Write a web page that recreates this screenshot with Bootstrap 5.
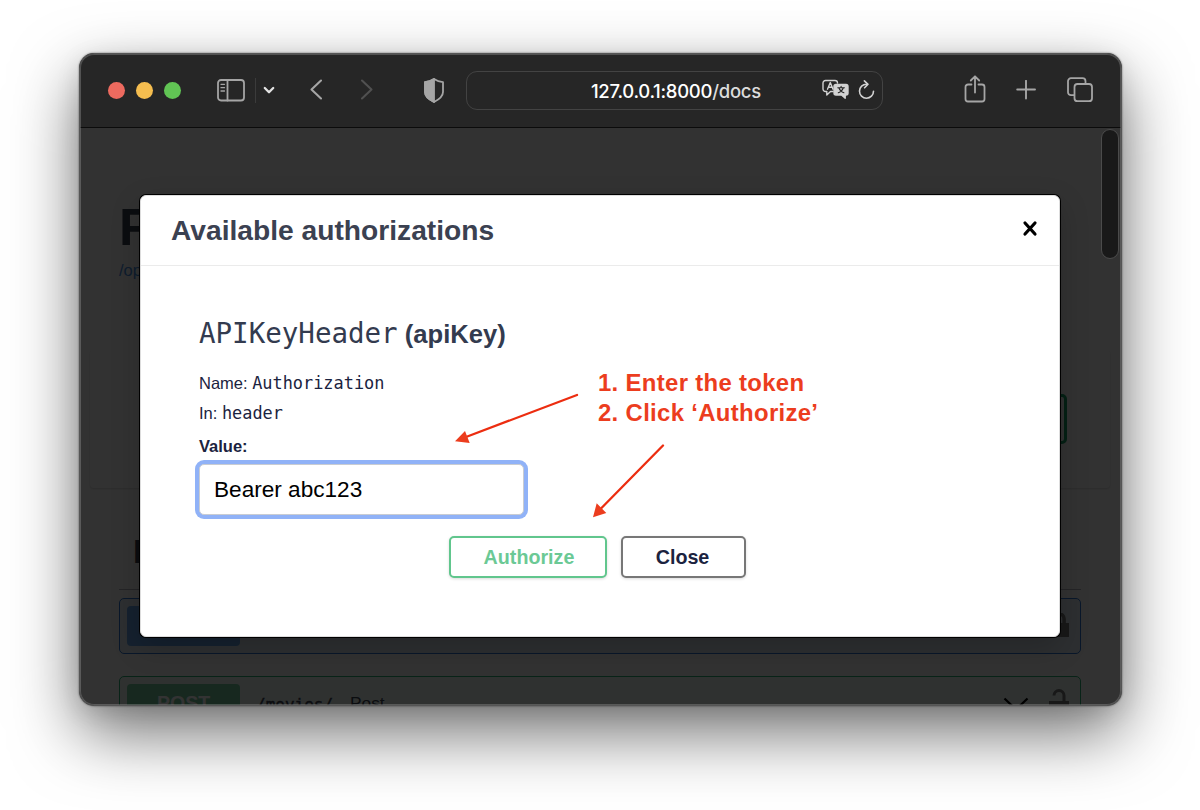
<!DOCTYPE html>
<html lang="en">
<head>
<meta charset="utf-8">
<title>127.0.0.1:8000/docs</title>
<meta name="viewport" content="width=device-width, initial-scale=1">
<link href="https://cdn.jsdelivr.net/npm/bootstrap@5.3.0/dist/css/bootstrap.min.css" rel="stylesheet">
<style>
  body { background: #fff; font-family: "Liberation Sans", Arial, sans-serif; color: #3b4151; }
  .desktop { width: 1200px; height: 810px; padding: 53px 0 0 78.5px; }
  .window { width: 1043px; height: 653px; border-radius: 15px; background: #fafafa;
    box-shadow: 0 0 2px rgba(0,0,0,.6), 0 27px 66px rgba(0,0,0,.56), 0 6px 24px rgba(0,0,0,.1); }
  .window-clip { border-radius: 15px; }
  .window-edge { inset: 0; border-radius: 15px; z-index: 9; pointer-events: none;
    border: 1px solid #555; box-shadow: inset 0 0 0 1px rgba(150,150,150,.4); }

  .toolbar { height: 75px; background: #262626; border-bottom: 1px solid #0b0b0b; padding-left: 29px; }
  .toolbar svg { flex: none; fill: none; stroke: #a5a5a5; stroke-width: 1.8; stroke-linecap: round; stroke-linejoin: round; }
  .light { width: 17px; height: 17px; border-radius: 50%; margin-right: 11.3px; }
  .tool-divider { width: 1px; height: 25px; background: #3b3b3b; margin-left: 10px; }
  .address { width: 417px; height: 39px; border: 1px solid #434343; border-radius: 11px; margin-left: 22.5px;
    font-family: Inter, sans-serif; font-size: 18.5px; font-weight: 500; color: #fff; padding-left: 123.5px; }
  .address-text { width: 231px; letter-spacing: -.28px; padding-top: 3px; }
  .address-text span { color: #dcdcdc; }

  .docs { height: 578px; padding: 0 40.5px; }
  .docs-title { font-size: 52px; font-weight: 700; line-height: 60px; padding-top: 68.5px; margin: 0; height: 132px; }
  .docs-link { font-size: 16.5px; line-height: 20px; color: #4990e2; text-decoration: none; }
  .scheme { margin: 70px -29px 0; height: 138px; padding-right: 43px; box-shadow: 0 1px 2px rgba(0,0,0,.15); border-radius: 4px; }
  .scheme-btn { width: 158px; height: 50px; border: 3px solid #14a065; border-radius: 5px; }
  .tag-title { margin: 22px 0 0; height: 80px; line-height: 84px; font-size: 33px; font-weight: 700; padding-left: 14px; border-bottom: 1px solid #b4b6bc; }
  .op { height: 56px; border: 1.5px solid; border-radius: 5px; padding: 0 10px 0 7px; font-size: 17.3px; }
  .op-get { border-color: #2f76cf; background: #e2eaf4; margin-top: 8px; }
  .op-post { border-color: #28ad74; background: #e8f6f0; margin-top: 22px; }
  .verb { width: 113px; height: 40px; border-radius: 4px; color: #fff; font-size: 19.5px; font-weight: 700; }
  .verb-get { background: #69a5e8; }
  .verb-post { background: #72c79c; }
  .op-path { font: 400 16px "DejaVu Sans Mono", monospace; margin-left: 16px; width: 94px; -webkit-text-stroke: .4px; }
  .shade { inset: 75px 0 0; background: rgba(0,0,0,.8); z-index: 2; border-radius: 0 0 15px 15px; }
  .scroll-thumb { left: 1022.5px; top: 76px; width: 18px; height: 130px; border-radius: 9px; background: #191919; border: 1px solid #4b4b4b; z-index: 3; }

  .auth { left: 61.5px; top: 142px; width: 920px; height: 442px; z-index: 4; background: #fff; border: 1px solid #ddd; border-radius: 6px;
    box-shadow: 0 0 0 1px #000, 0 10px 30px rgba(0,0,0,.2); }
  .auth-head { height: 70px; padding: 0 21px 0 30px; border-bottom: 1px solid #ebebeb; }
  .auth-head h3 { font-size: 28.2px; font-weight: 700; margin: 0; }
  .auth-body { padding: 45.5px 57px 0 58px; font-size: 16.5px; color: #1b2340; }
  .auth-body h4 { font-size: 25.6px; font-weight: 700; margin: 0; line-height: 43px; height: 44px; color: #333b4f; white-space: pre; }
  .mono { font-family: "DejaVu Sans Mono", monospace; font-weight: 400; }
  .field-row { height: 29.5px; line-height: 29.5px; white-space: pre; }
  .token-input { width: 325px; height: 51px; border: 1px solid #c9ccd2; border-radius: 5px; box-shadow: 0 0 0 4px #90b2f7; color: #000;
    font-size: 22.6px; padding: 0 14.5px; background: #fff; margin-left: -.5px; }
  .auth-btn { height: 42px; border: 2.5px solid; border-radius: 5px; font-size: 19.7px; font-weight: 700; background: #fff; box-shadow: 0 1px 3px rgba(0,0,0,.15); padding: 1px 0 0; }
  .btn-go { width: 158px; border-color: #61c68d; color: #6bc995; padding-left: 3px; }
  .btn-shut { width: 125px; border-color: #777; color: #1b2340; padding-right: 1px; }
  .note { left: 457px; top: 172px; font-size: 23.9px; line-height: 30px; font-weight: 700; letter-spacing: .33px; color: #ec3d1e; white-space: nowrap; }
  .arrows { left: 0; top: 0; }
</style>
</head>
<body>
<div class="desktop overflow-hidden">
  <div class="window position-relative">
    <div class="window-clip overflow-hidden h-100">
      <header class="toolbar d-flex align-items-center">
        <span class="light" style="background:#ed6a5f"></span>
        <span class="light" style="background:#f5bd4f"></span>
        <span class="light" style="background:#61c454"></span>
        <svg width="28" height="23" viewBox="0 0 28 23" style="margin-left:24.5px"><rect x="1" y="1" width="26" height="20.5" rx="3"/><path d="M10.5 1v20.5"/><path d="M4 5.3h3.5M4 8.7h3.5M4 12h3.5" stroke-width="1.3"/></svg>
        <span class="tool-divider"></span>
        <svg width="12" height="8" viewBox="0 0 12 8" style="margin-left:7px"><path d="M1.8 2 6 6.2 10.2 2" stroke="#e2e2e2" stroke-width="2.3"/></svg>
        <svg width="13" height="22" viewBox="0 0 13 22" style="margin-left:35px"><path d="M11 1.5 1.5 10.5 11 19.5" stroke-width="2.1"/></svg>
        <svg width="13" height="22" viewBox="0 0 13 22" style="margin-left:37px"><path d="M2 1.5 11.5 10.5 2 19.5" stroke="#505050" stroke-width="2.1"/></svg>
        <svg width="20" height="25" viewBox="0 0 20 25" style="margin-left:51px"><path d="M10 1C7 3 4 3.8 1 4.2V14c0 4.5 4 7.5 9 10 5-2.5 9-5.500 9-10V4.2C16 3.8 13 3 10 1z"/><path d="M10 1C7 3 4 3.8 1 4.2V14c0 4.5 4 7.5 9 10z" fill="#a5a5a5"/></svg>
        <div class="address d-flex align-items-center">
          <div class="address-text">127.0.0.1:8000<span>/docs</span></div>
          <svg width="27" height="21" viewBox="0 0 27 21" style="stroke:#d2d2d2;stroke-width:1.4;margin-top:-2px"><path d="M11 12.5H8.5L4.8 16v-3.5H3.5a2.5 2.5 0 0 1-2.5-2.5V4a2.5 2.5 0 0 1 2.5-2.5h9.5A2.5 2.5 0 0 1 15.5 4"/><path d="M5.5 10.2 8.3 3.6l2.7 6.6M6.3 8.3h4"/><path d="M14 5.5h10a2 2 0 0 1 2 2v6.5a2 2 0 0 1-2 2h-.8v3.3L19.5 16H14a2 2 0 0 1-2-2V7.5a2 2 0 0 1 2-2z" fill="#d2d2d2"/><path d="M15.8 8.8h6.6M19.1 7.3v1.5M21.3 9c-.8 2-2.5 4-5 4.8M16.9 9c.8 2 2.4 4 5 4.8" stroke="#262626" stroke-width="1.1"/></svg>
          <svg width="17" height="20" viewBox="0 0 17 20" style="margin-left:9px;stroke:#d2d2d2;stroke-width:1.6"><path d="M8.6 4.2A7 7 0 1 0 15.5 11.2"/><path d="M6.4.9 10 4.3 6.6 7.8"/></svg>
        </div>
        <svg width="22" height="30" viewBox="0 0 22 30" style="margin-left:81px"><path d="M7.5 9.5H4A2.5 2.5 0 0 0 1.5 12v12A2.5 2.5 0 0 0 4 26.5h14a2.5 2.5 0 0 0 2.5-2.5V12A2.5 2.5 0 0 0 18 9.5h-3.5M11 17.5V1.5M6.8 5.5 11 1.3 15.2 5.5"/></svg>
        <svg width="20" height="20" viewBox="0 0 20 20" style="margin-left:30px"><path d="M10 .8v17.7M1.2 9.5h17.8" stroke-width="1.9"/></svg>
        <svg width="26" height="26" viewBox="0 0 26 26" style="margin-left:31px"><rect x="7.5" y="7" width="17.5" height="17.2" rx="3"/><path d="M7 18.2H4A3 3 0 0 1 1 15.2V4.2a3 3 0 0 1 3-3h11.5a3 3 0 0 1 3 3V6.7"/></svg>
      </header>

      <main class="docs">
        <h1 class="docs-title">F</h1>
        <a class="docs-link d-block" href="#">/op</a>
        <div class="scheme d-flex align-items-center justify-content-end">
          <div class="scheme-btn"></div>
        </div>
        <h3 class="tag-title">I</h3>
        <div class="op op-get d-flex align-items-center">
          <span class="verb verb-get"></span>
          <svg class="ms-auto" width="22" height="26" viewBox="0 0 22 26"><path d="M1 10h20v14H1z" fill="#777"/><path d="M5.5 11V6a5.3 5.3 0 0 1 10.6 0v5" fill="none" stroke="#777" stroke-width="3.5"/></svg>
        </div>
        <div class="op op-post d-flex align-items-center">
          <span class="verb verb-post d-flex align-items-center justify-content-center">POST</span>
          <span class="op-path">/movies/</span><span>Post</span>
          <svg class="ms-auto" width="26" height="16" viewBox="0 0 26 16" style="margin-right:19px"><path d="M1.5 2.500 13 13.500 24.5 2.500" fill="none" stroke="#000" stroke-width="2.2"/></svg>
          <svg width="22" height="30" viewBox="0 0 22 30"><path d="M1 12h20v14H1z" fill="#777"/><path d="M6 6.5a5 5 0 0 1 10 0V13" fill="none" stroke="#777" stroke-width="3"/></svg>
        </div>
      </main>
    </div>

    <div class="shade position-absolute"></div>
    <div class="scroll-thumb position-absolute"></div>

    <section class="auth position-absolute">
      <div class="auth-head d-flex align-items-center justify-content-between">
        <h3>Available authorizations</h3>
        <svg width="16" height="17" viewBox="0 0 16 17" style="margin-top:-4px"><path d="M3 3 13 14M13 3 3 14" stroke="#000" stroke-width="3.2" stroke-linecap="round"/></svg>
      </div>
      <div class="auth-body">
        <h4><span class="mono" style="font-size:27.5px">APIKeyHeader</span> (apiKey)</h4>
        <div class="field-row" style="margin-top:13.5px">Name: <span class="mono" style="font-size:16.9px">Authorization</span></div>
        <div class="field-row">In: <span class="mono" style="font-size:16.9px">header</span></div>
        <div class="fw-bold" style="height:36px;line-height:36px">Value:</div>
        <div class="token-input d-flex align-items-center">Bearer abc123</div>
        <div class="d-flex" style="margin:21px 0 0 249.5px;gap:14px">
          <button class="auth-btn btn-go">Authorize</button>
          <button class="auth-btn btn-shut">Close</button>
        </div>
      </div>
      <div class="note position-absolute">1. Enter the token<br>2. Click ‘Authorize’</div>
      <svg class="arrows position-absolute" width="918" height="440" viewBox="141 196 918 440" fill="#ec3d1e" stroke="#ec2d10">
        <path d="M577 395 466 437M663 445.5 601 508.5" stroke-width="2.3" stroke-linecap="round"/>
        <path d="M455 441.3 465 431l4.7 12zM593 517.3l3.7-14L606.3 513z" stroke="none"/>
      </svg>
    </section>
    <div class="window-edge position-absolute"></div>
  </div>
</div>
<script src="https://cdn.jsdelivr.net/npm/bootstrap@5.3.0/dist/js/bootstrap.bundle.min.js"></script>
</body>
</html>
